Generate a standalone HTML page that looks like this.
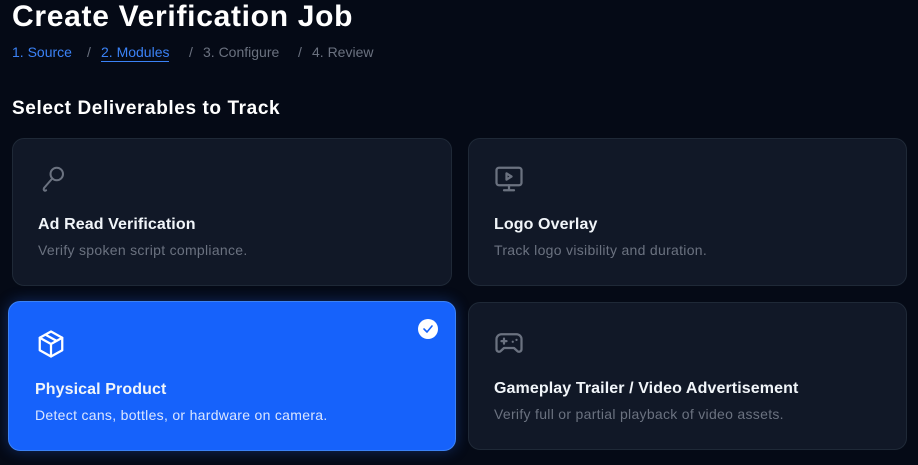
<!DOCTYPE html>
<html><head><style>
*{margin:0;padding:0;box-sizing:border-box}
body{width:918px;height:465px;background:#050a16;font-family:"Liberation Sans",sans-serif;position:relative;overflow:hidden;color:#fff}
h1{position:absolute;left:12px;top:0;font-size:30px;font-weight:700;letter-spacing:0.7px}
.bc{position:absolute;left:12px;top:44px;font-size:14px;color:#6b7280;white-space:nowrap}
.bc span{position:absolute;top:0}
.bl{color:#3b82f6}
h2{position:absolute;left:12px;top:98px;font-size:19px;font-weight:700;letter-spacing:0.6px}
.card{position:absolute;background:#111827;border:1.5px solid #1f2937;border-radius:12px}
.card svg{position:absolute;left:25px;top:25px}
.t{position:absolute;left:25px;top:77px;font-size:16px;font-weight:700;color:#f1f5f9;letter-spacing:0.1px}
.d{position:absolute;left:25px;top:103px;font-size:14px;color:#6b7280;letter-spacing:0.3px}
.sel{background:#1662fb;border:1.5px solid #3b82f6;box-shadow:0 0 14px rgba(37,99,235,.35)}
.sel .d{color:#dbe6ff}
</style></head><body>
<h1>Create Verification Job</h1>
<div class="bc">
<span class="bl" style="left:0">1. Source</span>
<span style="left:75px">/</span>
<span class="bl" style="left:89px;border-bottom:1.5px solid #3b82f6;padding-bottom:1px">2. Modules</span>
<span style="left:177px">/</span>
<span style="left:191px">3. Configure</span>
<span style="left:286px">/</span>
<span style="left:300px">4. Review</span>
</div>
<h2>Select Deliverables to Track</h2>

<div class="card" style="left:12px;top:138px;width:440px;height:148px">
<svg width="30" height="30" viewBox="0 0 24 24" fill="none" stroke="#6b7280" stroke-width="1.6" stroke-linecap="round" stroke-linejoin="round"><circle cx="15" cy="8" r="5"/><path d="M11.5 11.5L5 19"/><path d="M5 19c-1 1.5 0 3 1.5 2"/></svg>
<div class="t">Ad Read Verification</div><div class="d">Verify spoken script compliance.</div>
</div>

<div class="card" style="left:468px;top:138px;width:439px;height:148px">
<svg width="30" height="30" viewBox="0 0 24 24" fill="none" stroke="#6b7280" stroke-width="1.8" stroke-linecap="round" stroke-linejoin="round"><rect x="2" y="3" width="20" height="14" rx="2"/><path d="M12 17v4M8 21h8M10 7.5v5l4-2.5z"/></svg>
<div class="t">Logo Overlay</div><div class="d">Track logo visibility and duration.</div>
</div>

<div class="card sel" style="left:8px;top:301px;width:448px;height:150px">
<svg style="left:27px;top:27px" width="30" height="30" viewBox="0 0 24 24" fill="none" stroke="#fff" stroke-width="1.8" stroke-linecap="round" stroke-linejoin="round"><path d="M12 2l9 5v10l-9 5-9-5V7z"/><path d="M3 7l9 5 9-5M12 12v10M7.5 4.5l9 5"/></svg>
<div class="t" style="left:26px;top:79px">Physical Product</div><div class="d" style="left:26px;top:105px">Detect cans, bottles, or hardware on camera.</div>
<svg style="left:409px;top:17px" width="20" height="20" viewBox="0 0 20 20"><circle cx="10" cy="10" r="10" fill="#fff"/><path d="M6 10l3 3 5-6" fill="none" stroke="#1662fb" stroke-width="1.6" stroke-linecap="round" stroke-linejoin="round"/></svg>
</div>

<div class="card" style="left:468px;top:302px;width:439px;height:148px">
<svg width="30" height="30" viewBox="0 0 24 24" fill="none" stroke="#6b7280" stroke-width="1.8" stroke-linecap="round" stroke-linejoin="round"><path d="M6 5h12a4 4 0 0 1 4 4v8a2 2 0 0 1-3.5 1.3L16 16H8l-2.5 2.3A2 2 0 0 1 2 17V9a4 4 0 0 1 4-4z"/><path d="M6 10.5h4M8 8.5v4M15 11h.01M18 9.5h.01"/></svg>
<div class="t">Gameplay Trailer / Video Advertisement</div><div class="d">Verify full or partial playback of video assets.</div>
</div>
</body></html>
